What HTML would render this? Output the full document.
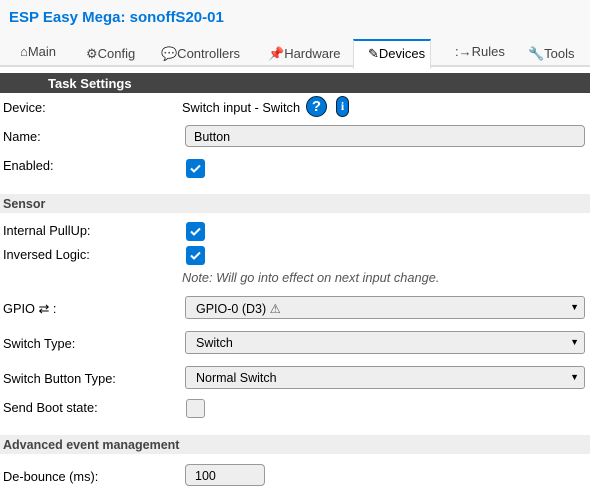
<!DOCTYPE html>
<html><head><meta charset="utf-8"><style>
*{margin:0;padding:0;box-sizing:border-box}
body{width:590px;height:494px;overflow:hidden;background:#fff;font-family:"Liberation Sans",sans-serif;font-size:12.8px;color:#000;position:relative}
.a{position:absolute;white-space:nowrap}
.top{position:absolute;left:0;top:0;width:590px;height:67px;background:#f8f8f8;border-bottom:2px solid #ddd}
.title{left:9px;top:9px;font-size:15px;font-weight:bold;color:#07d}
.tab{top:46px;font-size:13px;color:#444}
.act{position:absolute;left:353px;top:39px;width:78px;height:30px;background:#fff;border-top:2px solid #07d;border-left:1px solid #ddd;border-right:1px solid #ddd}
.hdr{position:absolute;left:0;top:73px;width:590px;height:20px;background:#444;color:#fff;font-weight:bold;font-size:13px;padding:3px 0 0 48px}
.bar{position:absolute;left:0;width:590px;height:19px;background:#eee;color:#444;font-weight:bold;font-size:12.5px;padding:3px 0 0 3px}
.lbl{left:3px}
.inp{position:absolute;left:185px;height:22px;background:#eee;border:1px solid #999;border-radius:4px;padding:4px 0 0 8px;font-size:12.5px}
.cb{position:absolute;left:186px;width:19px;height:19px;background:#0078d7;border-radius:3px}
.cb svg{position:absolute;left:4px;top:5px}
.cbo{position:absolute;left:186px;width:19px;height:19px;background:#eee;border:1px solid #999;border-radius:3px}
.sel{position:absolute;left:185px;width:400px;height:23px;background:#eee;border:1px solid #999;border-radius:3px;padding:4px 0 0 10px;font-size:12.5px}
.sel:after{content:"▼";position:absolute;right:5px;top:5px;font-size:9px}
</style></head><body>
<div class="top"></div>
<div class="a title">ESP Easy Mega: sonoffS20-01</div>
<div class="act"></div>
<div class="a tab" style="left:20px;top:44px">⌂Main</div>
<div class="a tab" style="left:86px">⚙Config</div>
<div class="a tab" style="left:161px">💬Controllers</div>
<div class="a tab" style="left:268px"><span style="color:#d22">📌</span>Hardware</div>
<div class="a tab" style="left:368px;color:#000">✎Devices</div>
<div class="a tab" style="left:455px;top:44px">:→Rules</div>
<div class="a tab" style="left:528px">🔧Tools</div>
<div class="hdr">Task Settings</div>
<div class="a lbl" style="top:100px">Device:</div>
<div class="a" style="left:182px;top:100px">Switch input - Switch</div>
<div class="a" style="left:306px;top:96px;width:21px;height:21px;border-radius:50%;background:#0078d7;border:1px solid #024;color:#fff;font-weight:bold;font-size:15px;text-align:center;line-height:19px">?</div>
<div class="a" style="left:336px;top:96px;width:13px;height:21px;border-radius:7px;background:#0078d7;border:1px solid #024;color:#fff;font-weight:bold;font-size:12px;text-align:center;line-height:19px;font-family:'Liberation Serif',serif">i</div>
<div class="a lbl" style="top:129px">Name:</div>
<div class="inp" style="top:125px;width:400px">Button</div>
<div class="a lbl" style="top:158px">Enabled:</div>
<div class="cb" style="top:159px"><svg width="11" height="9" viewBox="0 0 11 9"><path d="M1 4.5L4 7.5L10 1.5" stroke="#fff" stroke-width="2" fill="none"/></svg></div>
<div class="bar" style="top:194px">Sensor</div>
<div class="a lbl" style="top:223px">Internal PullUp:</div>
<div class="cb" style="top:222px"><svg width="11" height="9" viewBox="0 0 11 9"><path d="M1 4.5L4 7.5L10 1.5" stroke="#fff" stroke-width="2" fill="none"/></svg></div>
<div class="a lbl" style="top:247px">Inversed Logic:</div>
<div class="cb" style="top:246px"><svg width="11" height="9" viewBox="0 0 11 9"><path d="M1 4.5L4 7.5L10 1.5" stroke="#fff" stroke-width="2" fill="none"/></svg></div>
<div class="a" style="left:182px;top:270px;font-style:italic;color:#555">Note: Will go into effect on next input change.</div>
<div class="a lbl" style="top:301px">GPIO ⇄ :</div>
<div class="sel" style="top:296px">GPIO-0 (D3) <span style="color:#555">⚠</span></div>
<div class="a lbl" style="top:336px">Switch Type:</div>
<div class="sel" style="top:331px">Switch</div>
<div class="a lbl" style="top:371px">Switch Button Type:</div>
<div class="sel" style="top:366px">Normal Switch</div>
<div class="a lbl" style="top:400px">Send Boot state:</div>
<div class="cbo" style="top:399px"></div>
<div class="bar" style="top:435px">Advanced event management</div>
<div class="a lbl" style="top:469px">De-bounce (ms):</div>
<div class="inp" style="top:464px;width:80px;padding-left:9px">100</div>
</body></html>
